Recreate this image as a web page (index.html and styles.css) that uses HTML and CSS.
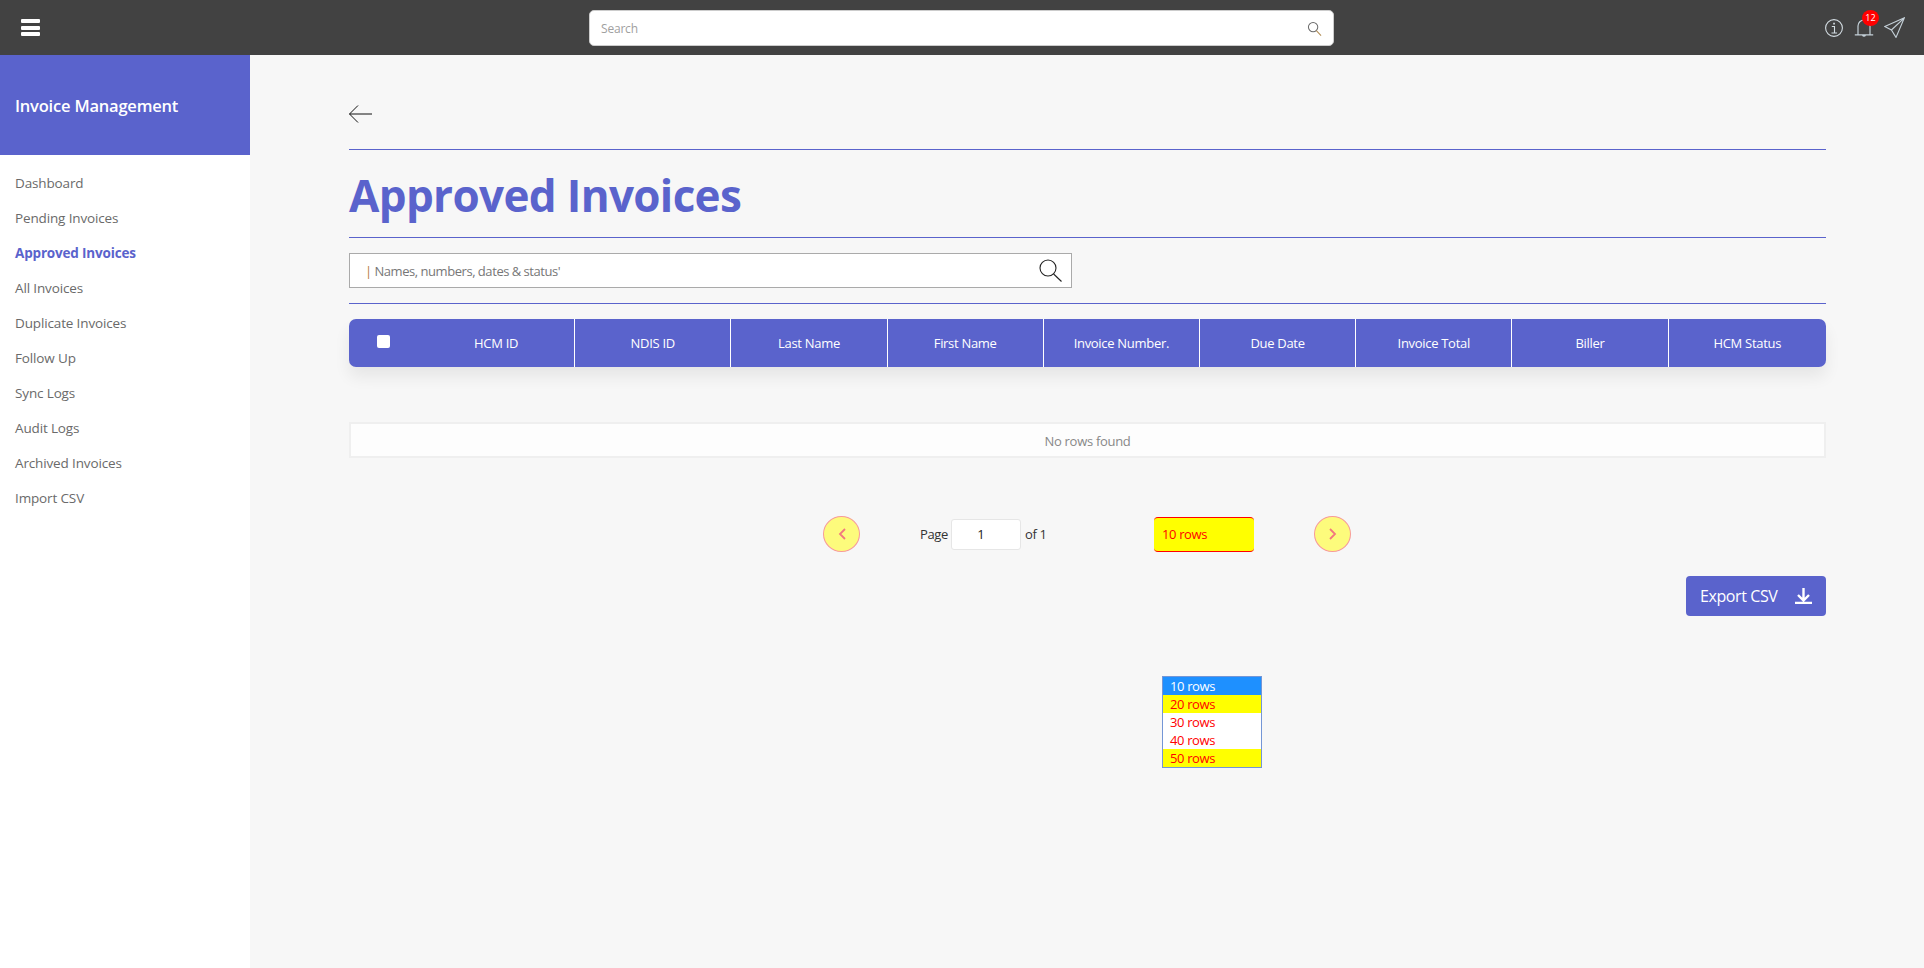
FILE: index.html
```html
<!DOCTYPE html>
<html lang="en">
<head>
    <meta charset="UTF-8">
    <title>Approved Invoices</title>
    <link rel="stylesheet" href="styles.css">
</head>
<body>

<header class="topbar">
    <div class="menu-btn"><span></span><span></span><span></span></div>
    <div class="top-search">
        <input type="text" placeholder="Search">
        <svg width="15" height="15" viewBox="0 0 16 16" fill="none" stroke="#6b6b6b" stroke-width="1.1"><circle cx="6.500" cy="6.500" r="5"/><path d="M10 10.300 15 15.500" stroke="#b08a50"/></svg>
    </div>
    <div class="top-icons">
        <svg class="info-icon" width="18" height="18" viewBox="0 0 18 18" fill="none" stroke="#d4dde3" stroke-width="1.100"><circle cx="9" cy="9" r="8.400"/><path d="M6.800 7.500h2.700v6.300M6.500 14h5.600" /><path d="M8.200 3.800h1.700v1.700H8.200z" fill="#d4dde3" stroke="none"/></svg>
        <div class="bell">
            <svg width="20" height="20" viewBox="0 0 20 20" fill="none" stroke="#c4d0d8" stroke-width="1.200"><path d="M4 16.500V8a6 6 0 0 1 12 0v8.500M.8 16.800h18.400M8.600 17.200a1.500 1.500 0 0 0 2.800 0"/></svg>
            <span class="badge">12</span>
        </div>
        <svg width="21" height="21" viewBox="0 0 21 21" fill="none" stroke="#c4d0d8" stroke-width="1.100"><path d="M20.400.8.800 9.600l6.600 3.400 4.600 7.400zM20.400.8 7.400 13"/></svg>
    </div>
</header>

<div class="layout">
    <aside class="sidebar">
        <div class="brand">Invoice Management</div>
        <nav class="side-nav">
            <a href="#">Dashboard</a>
            <a href="#">Pending Invoices</a>
            <a href="#" class="active">Approved Invoices</a>
            <a href="#">All Invoices</a>
            <a href="#">Duplicate Invoices</a>
            <a href="#">Follow Up</a>
            <a href="#">Sync Logs</a>
            <a href="#">Audit Logs</a>
            <a href="#">Archived Invoices</a>
            <a href="#">Import CSV</a>
        </nav>
    </aside>

    <main class="content">
        <div class="back-row">
            <svg width="24" height="18" viewBox="0 0 24 18" fill="none" stroke="#111" stroke-width="1"><path d="M23 9H.5M9 .5.500 9 9 17.500"/></svg>
        </div>
        <h1 class="page-title">Approved Invoices</h1>
        <div class="filter-row">
            <div class="filter-box">
                <span class="filter-text"><span class="bar">|</span> Names, numbers, dates &amp; status'</span>
                <svg width="23" height="23" viewBox="0 0 23 23" fill="none" stroke="#222" stroke-width="1.100"><circle cx="9" cy="9" r="8"/><path d="M14.600 15 22.500 22.500"/></svg>
            </div>
        </div>

        <div class="table-head">
            <div class="check-cell"><span class="check"></span></div>
            <div class="col first">HCM ID</div>
            <div class="col">NDIS ID</div>
            <div class="col">Last Name</div>
            <div class="col">First Name</div>
            <div class="col">Invoice Number.</div>
            <div class="col">Due Date</div>
            <div class="col">Invoice Total</div>
            <div class="col">Biller</div>
            <div class="col">HCM Status</div>
        </div>

        <div class="no-rows">No rows found</div>

        <div class="pager">
            <button class="round-btn">
                <svg width="10" height="12" viewBox="0 0 10 12" fill="none" stroke="#f2787f" stroke-width="1.800"><path d="M8 1 3 6l5 5"/></svg>
            </button>
            <div class="page-info">
                Page <input class="page-input" type="text" value="1"> of 1
            </div>
            <div class="rows-select">10 rows</div>
            <button class="round-btn">
                <svg width="10" height="12" viewBox="0 0 10 12" fill="none" stroke="#f2787f" stroke-width="1.800"><path d="m2 1 5 5-5 5"/></svg>
            </button>
        </div>

        <div class="export-row">
            <button class="export-btn">
                Export CSV
                <svg width="17" height="16" viewBox="0 0 17 16" fill="none" stroke="#fff" stroke-width="2.400"><path d="M8.500 0v12M3 7l5.500 5.500L14 7M0 15h17"/></svg>
            </button>
        </div>

        <ul class="rows-menu">
            <li class="selected">10 rows</li>
            <li class="yellow">20 rows</li>
            <li>30 rows</li>
            <li>40 rows</li>
            <li class="yellow">50 rows</li>
        </ul>
    </main>
</div>

</body>
</html>
```

FILE: styles.css
```css
* {
    box-sizing: border-box;
}
body {
    margin: 0;
    font-family: "Open Sans", "Noto Sans", Arial, sans-serif;
    font-size: 13px;
    background-color: #f7f7f7;
}
.topbar {
    height: 55px;
    background: #424242;
    display: flex;
    align-items: center;
    padding: 0 19px 0 21px;
}
.menu-btn {
    width: 19px;
    display: flex;
    flex-direction: column;
    gap: 2.500px;
}
.menu-btn span {
    height: 4px;
    background: white;
    border-radius: 1px;
}
.top-search {
    width: 745px;
    height: 36px;
    margin-left: 549px;
    margin-top: 1px;
    background: white;
    border: 1px solid #ccc;
    border-radius: 5px;
    display: flex;
    align-items: center;
    padding: 0 11px;
}
.top-search input {
    flex: 1;
    border: none;
    outline: none;
    font-family: inherit;
    font-size: 12px;
    letter-spacing: -0.2px;
    padding: 0;
}
.top-search input::placeholder {
    color: #a0a0a0;
}
.top-icons {
    margin-left: auto;
    display: flex;
    align-items: center;
    gap: 10px;
}
.info-icon {
    margin-right: 1px;
}
.bell {
    position: relative;
    height: 20px;
}
.badge {
    position: absolute;
    left: 8px;
    top: -8px;
    width: 17px;
    height: 16px;
    background: #f00;
    color: white;
    border-radius: 50%;
    font-size: 9px;
    line-height: 16px;
    text-align: center;
}
.layout {
    display: flex;
    min-height: 913px;
}
.sidebar {
    width: 250px;
    flex-shrink: 0;
    background: white;
}
.brand {
    height: 100px;
    background: #5a63cc;
    color: white;
    font-size: 16.500px;
    font-weight: 600;
    letter-spacing: -0.2px;
    padding: 0 15px;
    line-height: 101px;
}
.side-nav {
    display: flex;
    flex-direction: column;
    padding-top: 11px;
}
.side-nav a {
    height: 35px;
    line-height: 35px;
    padding-left: 15px;
    color: #6a6a6a;
    font-size: 13.500px;
    letter-spacing: -0.14px;
    text-decoration: none;
}
.side-nav a.active {
    color: #5a63cc;
    font-weight: 700;
    letter-spacing: -0.17px;
}
.content {
    flex: 1;
    padding: 50px 98px 0 99px;
    position: relative;
}
.back-row {
    height: 45px;
    border-bottom: 1px solid #5a63cc;
}
.back-row svg {
    display: block;
}
.page-title {
    margin: 0;
    height: 88px;
    line-height: 89px;
    font-size: 44px;
    font-weight: 700;
    color: #5a63cc;
    letter-spacing: -0.65px;
    border-bottom: 1px solid #5a63cc;
    padding-top: 1px;
}
.filter-row {
    padding: 15px 0 15px;
    border-bottom: 1px solid #5a63cc;
}
.filter-box {
    width: 723px;
    height: 35px;
    background: white;
    border: 1px solid #aaa;
    display: flex;
    align-items: center;
    justify-content: space-between;
    padding: 0 9px 0 15px;
}
.filter-text {
    color: #777;
    font-size: 13px;
    letter-spacing: -0.42px;
    word-spacing: -0.3px;
}
.filter-text .bar {
    color: #b5793c;
}
.table-head {
    margin-top: 15px;
    height: 48px;
    background: #5a63cc;
    border-radius: 7px;
    box-shadow: 0 10px 16px rgba(0, 0, 0, 0.07);
    display: grid;
    grid-template-columns: 69px repeat(8, 156.200px) 1fr;
    align-items: stretch;
    color: white;
    font-size: 13px;
    letter-spacing: -0.3px;
}
.check-cell {
    padding: 16px 0 0 28px;
}
.check {
    display: block;
    width: 13px;
    height: 13px;
    background: white;
    border-radius: 2px;
}
.col {
    display: flex;
    align-items: center;
    justify-content: center;
    border-left: 1px solid white;
}
.col.first {
    border-left: none;
}
.no-rows {
    margin-top: 55px;
    height: 36px;
    background: #fdfdfd;
    border: 2px solid #efefef;
    color: #888;
    font-size: 13px;
    letter-spacing: -0.3px;
    text-align: center;
    line-height: 34px;
}
.pager {
    margin-top: 58px;
    margin-left: 474px;
    height: 36px;
    display: flex;
    align-items: center;
}
.round-btn {
    width: 37px;
    height: 36px;
    border-radius: 50%;
    border: 1px solid #f79a9a;
    background: #fdfb7c;
    padding: 0;
    display: flex;
    align-items: center;
    justify-content: center;
}
.page-info {
    margin-left: 60px;
    width: 234px;
    display: flex;
    align-items: center;
    gap: 3px;
    color: #333;
    font-size: 13px;
    letter-spacing: -0.35px;
}
.page-input {
    width: 70px;
    height: 31px;
    border: 1px solid #e6e6e6;
    border-radius: 3px;
    background: white;
    text-align: center;
    font-family: inherit;
    font-size: 13px;
    color: #222;
    outline: none;
    padding: 0 10px 0 0;
    margin-right: 1px;
}
.rows-select {
    width: 100px;
    height: 35px;
    background: #ff0;
    color: #f00;
    border-top: 1px solid #f00;
    border-bottom: 1px solid #f00;
    border-radius: 4px;
    font-size: 13px;
    letter-spacing: -0.36px;
    line-height: 33px;
    padding-left: 8px;
}
.rows-select + .round-btn {
    margin-left: 60px;
}
.export-row {
    display: flex;
    justify-content: flex-end;
    margin-top: 24px;
}
.export-btn {
    width: 140px;
    height: 40px;
    background: #5a63cc;
    color: white;
    border: none;
    border-radius: 4px;
    font-family: inherit;
    font-size: 16px;
    letter-spacing: -0.4px;
    display: flex;
    align-items: center;
    justify-content: space-between;
    padding: 0 14px;
}
.rows-menu {
    position: absolute;
    left: 912px;
    top: 621px;
    width: 100px;
    margin: 0;
    padding: 0;
    list-style: none;
    background: white;
    border: 1px solid #7496d6;
    color: #f00;
    font-size: 13px;
    letter-spacing: -0.36px;
}
.rows-menu li {
    height: 18px;
    line-height: 18px;
    padding-left: 7px;
}
.rows-menu .selected {
    background: #1e90ff;
    color: white;
}
.rows-menu .yellow {
    background: #ff0;
}
```
